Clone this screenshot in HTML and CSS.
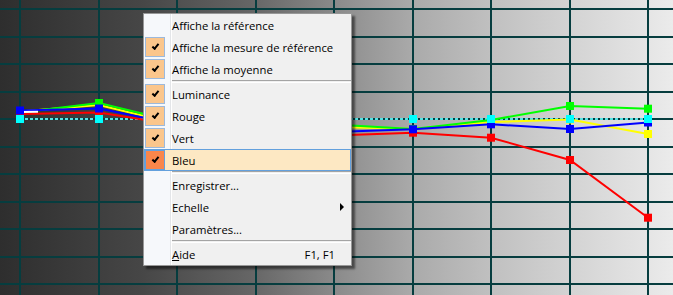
FILE: index.html
```html
<!DOCTYPE html>
<html>
<head>
  <title>Courbes de mesure</title>
  <link rel="stylesheet" href="styles.css">
</head>

<body>
  <div class="chart">
    <svg class="plot" width="673" height="295" viewBox="0 0 673 295">
      <g class="grid">
        <line x1="20" y1="0" x2="20" y2="295"/>
        <line x1="99" y1="0" x2="99" y2="295"/>
        <line x1="177" y1="0" x2="177" y2="295"/>
        <line x1="256" y1="0" x2="256" y2="295"/>
        <line x1="334" y1="0" x2="334" y2="295"/>
        <line x1="413" y1="0" x2="413" y2="295"/>
        <line x1="491" y1="0" x2="491" y2="295"/>
        <line x1="570" y1="0" x2="570" y2="295"/>
        <line x1="648" y1="0" x2="648" y2="295"/>
        <line x1="0" y1="9" x2="673" y2="9"/>
        <line x1="0" y1="37" x2="673" y2="37"/>
        <line x1="0" y1="64" x2="673" y2="64"/>
        <line x1="0" y1="92" x2="673" y2="92"/>
        <line x1="0" y1="119" x2="673" y2="119"/>
        <line x1="0" y1="147" x2="673" y2="147"/>
        <line x1="0" y1="174" x2="673" y2="174"/>
        <line x1="0" y1="202" x2="673" y2="202"/>
        <line x1="0" y1="229" x2="673" y2="229"/>
        <line x1="0" y1="257" x2="673" y2="257"/>
        <line x1="0" y1="284" x2="673" y2="284"/>
      </g>

      <line class="ref-line" x1="20" y1="119" x2="648" y2="119"/>

      <!-- luminance -->
      <polyline class="series yellow" points="20,111.5 99,105 177,124 256,126 334,127 413,129 491,122 570,119.5 648,134"/>
      <g class="marks yellow">
        <rect x="409" y="125" width="8" height="8"/>
        <rect x="487" y="118" width="8" height="8"/>
        <rect x="566" y="115.5" width="8" height="8"/>
        <rect x="644" y="130" width="8" height="8"/>
      </g>

      <!-- rouge -->
      <polyline class="series red" points="20,114 99,112.5 177,125 256,130 334,135.5 413,132.7 491,137.7 570,160 648,217.7"/>
      <g class="marks red">
        <rect x="16" y="110" width="8" height="8"/>
        <rect x="95" y="108.5" width="8" height="8"/>
        <rect x="409" y="128.7" width="8" height="8"/>
        <rect x="487" y="133.7" width="8" height="8"/>
        <rect x="566" y="156" width="8" height="8"/>
        <rect x="644" y="213.7" width="8" height="8"/>
      </g>

      <!-- vert -->
      <polyline class="series green" points="20,112.5 99,103 177,122 256,123 334,124.5 413,129 491,120 570,106 648,108.7"/>
      <g class="marks green">
        <rect x="95" y="99" width="8" height="8"/>
        <rect x="409" y="125" width="8" height="8"/>
        <rect x="487" y="116" width="8" height="8"/>
        <rect x="566" y="102" width="8" height="8"/>
        <rect x="644" y="104.7" width="8" height="8"/>
      </g>

      <!-- bleu -->
      <polyline class="series blue" points="20,110.5 99,108.5 177,124.6 256,128 334,132 413,129.3 491,124.3 570,129 648,122.5"/>
      <polyline class="series white" points="20,112 38,111.7"/>
      <g class="marks blue">
        <rect x="16" y="106.5" width="8" height="8"/>
        <rect x="95" y="104.5" width="8" height="8"/>
        <rect x="409" y="125.3" width="8" height="8"/>
        <rect x="487" y="120.3" width="8" height="8"/>
        <rect x="566" y="125" width="8" height="8"/>
        <rect x="644" y="118.5" width="8" height="8"/>
      </g>

      <!-- reference -->
      <g class="marks cyan">
        <rect x="16" y="115" width="8" height="8"/>
        <rect x="95" y="115" width="8" height="8"/>
        <rect x="409" y="115" width="8" height="8"/>
        <rect x="487" y="115" width="8" height="8"/>
        <rect x="566" y="115" width="8" height="8"/>
        <rect x="644" y="115" width="8" height="8"/>
      </g>
    </svg>

    <div class="menu">
      <div class="item"><span class="check"></span><span class="label">Affiche la référence</span></div>
      <div class="item"><span class="check on"></span><span class="label">Affiche la mesure de référence</span></div>
      <div class="item"><span class="check on"></span><span class="label">Affiche la moyenne</span></div>
      <div class="sep"></div>
      <div class="item"><span class="check on"></span><span class="label">Luminance</span></div>
      <div class="item"><span class="check on"></span><span class="label">Rouge</span></div>
      <div class="item"><span class="check on"></span><span class="label">Vert</span></div>
      <div class="item hover"><span class="check on"></span><span class="label">Bleu</span></div>
      <div class="sep"></div>
      <div class="item"><span class="check"></span><span class="label">Enregistrer...</span></div>
      <div class="item"><span class="check"></span><span class="label">Echelle</span><span class="arrow"></span></div>
      <div class="item"><span class="check"></span><span class="label">Paramètres...</span></div>
      <div class="sep"></div>
      <div class="item"><span class="check"></span><span class="label"><u>A</u>ide</span><span class="shortcut">F1, F1</span></div>
    </div>
  </div>
</body>
</html>
```

FILE: styles.css
```css
body {
  margin: 0;
}

.chart {
  position: relative;
  width: 673px;
  height: 295px;
  overflow: hidden;
  background: linear-gradient(to right, #2e2e2e 0px, #464646 140px, #656565 250px, #939393 355px, #aaaaaa 413px, #c0c0c0 491px, #d3d3d3 570px, #e3e3e3 640px, #ebebeb 673px);
}

.plot {
  display: block;
}

.grid line {
  stroke: #063d3f;
  stroke-width: 2;
  shape-rendering: crispEdges;
}

.ref-line {
  stroke: #55e4e6;
  stroke-width: 2;
  stroke-dasharray: 3 2;
  shape-rendering: crispEdges;
}

.series {
  fill: none;
  stroke-width: 2;
}

.series.yellow { stroke: #ffff00; }
.series.red { stroke: #ff0000; }
.series.green { stroke: #00ff00; }
.series.blue { stroke: #0000ff; }
.series.white { stroke: #ffffff; }

.marks.yellow { fill: #ffff00; }
.marks.red { fill: #ff0000; }
.marks.green { fill: #00ff00; }
.marks.blue { fill: #0000ff; }
.marks.cyan { fill: #00ffff; }

/* context menu */
.menu {
  position: absolute;
  left: 143px;
  top: 13px;
  width: 209px;
  box-sizing: border-box;
  border: 1px solid #979797;
  background: linear-gradient(to right, #f6f8fb 0, #f6f8fb 26px, #e3e5e8 26px, #e3e5e8 27px, #ffffff 27px, #ffffff 28px, #f0f0f0 28px);
  box-shadow: 3px 3px 2px rgba(0, 0, 0, 0.5);
  font-family: "Open Sans", "Liberation Sans", sans-serif;
  font-size: 11.3px;
  color: #000;
}

.item {
  display: flex;
  align-items: center;
  height: 22px;
  box-sizing: border-box;
  border: 1px solid transparent;
}

.item.hover {
  background: #fde8c3;
  border-color: #63a0dd;
}

.check {
  display: flex;
  align-items: center;
  justify-content: center;
  width: 20px;
  height: 20px;
  box-sizing: border-box;
}

.check.on {
  background: #fbc68c;
  border: 1px solid #9cb9dc;
}

.item.hover .check.on {
  background: #f9864b;
  border-color: #63a0dd;
}

.check.on::after {
  content: "";
  width: 5px;
  height: 2px;
  border-left: 2px solid #000;
  border-bottom: 2px solid #000;
  transform: rotate(-50deg);
  margin-top: -2px;
}

.label {
  margin-left: 7px;
}

.arrow {
  margin-left: auto;
  margin-right: 6px;
  border-left: 4px solid #000;
  border-top: 4px solid transparent;
  border-bottom: 4px solid transparent;
}

.shortcut {
  margin-left: auto;
  margin-right: 15px;
}

.sep {
  height: 3px;
  margin-left: 28px;
  box-sizing: border-box;
  border-top: 1px solid #a4a4a4;
  border-bottom: 1px solid #ffffff;
}
```
